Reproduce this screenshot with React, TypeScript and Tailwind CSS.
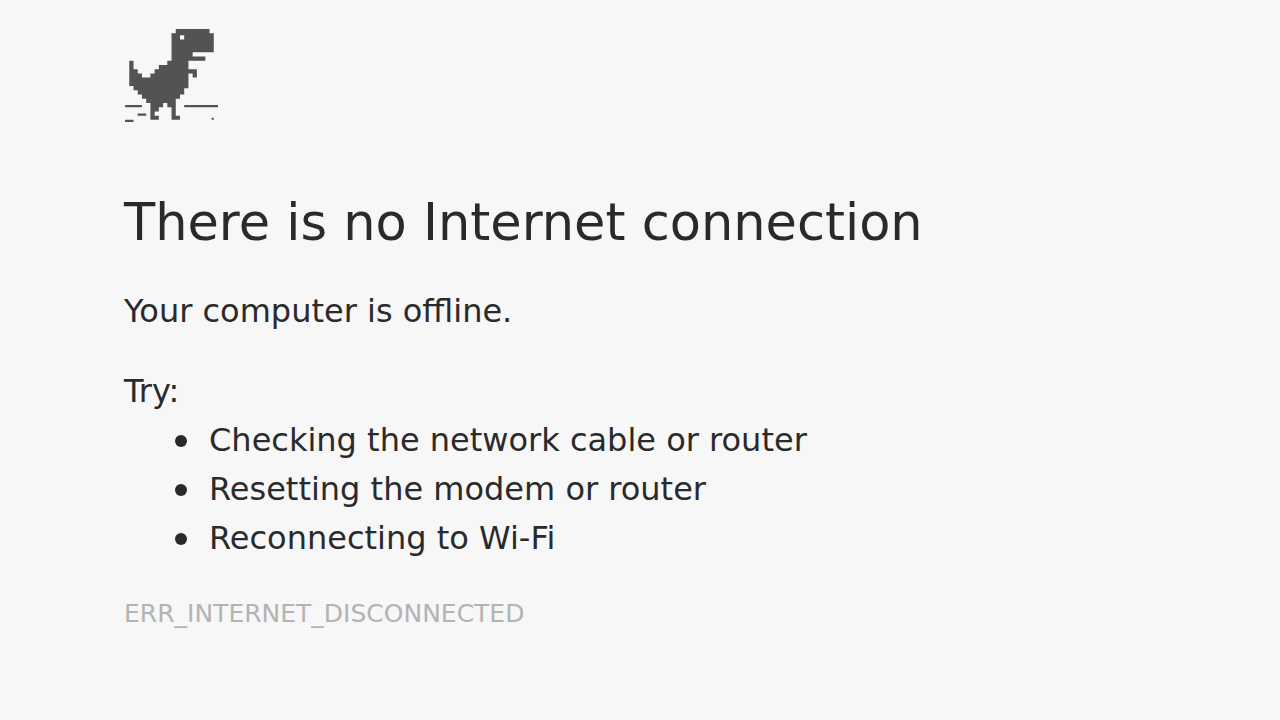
const tips = [
  "Checking the network cable or router",
  "Resetting the modem or router",
  "Reconnecting to Wi-Fi",
];

function DinoIcon() {
  return (
    <svg
      viewBox="-2.5 0 44.5 44"
      className="w-[94px] h-[93px] text-[#535353]"
      fill="currentColor"
      role="img"
      aria-label="Dinosaur"
    >
      {/* body, with the eye cut out */}
      <path
        fillRule="evenodd"
        d="M22 0H38V2H40V11H30V13H36V15H28V19H32V23H30V21H28V28H26V31H24V33H22V41H24V43H20V37H18V35H16V37H14V39H12V41H14V43H10V35H8V33H6V31H4V29H2V27H0V15H2V19H4V21H6V23H10V21H12V19H14V17H18V15H20V2H22Z M24 3V5H26V3Z"
      />
      {/* ground */}
      <path d="M-2 36H6V37H-2Z M4 40H8V41H4Z M-2 43H2V44H-2Z M26 36H42V37H26Z M39 42H40V43H39Z" />
    </svg>
  );
}

export default function App() {
  return (
    <div className="min-h-screen bg-[#f7f7f7] pl-[124px] pr-8 pt-[29px] pb-8 font-['DejaVu_Sans',sans-serif] text-[32px] leading-[49px] text-[#2a2a2c]">
      <DinoIcon />
      <main>
        <h1 className="mt-[69px] text-[51px] leading-[64px]">There is no Internet connection</h1>
        <p className="mt-8">Your computer is offline.</p>
        <div className="mt-[31px]">
          <p>Try:</p>
          <ul className="pl-[51px]">
            {tips.map((tip) => (
              <li
                key={tip}
                className="flex items-center gap-[22px] before:size-3 before:shrink-0 before:rounded-full before:bg-[#2a2a2c]"
              >
                {tip}
              </li>
            ))}
          </ul>
        </div>
        <p className="mt-8 text-[25px] leading-[38px] text-[#b3b3b3]">ERR_INTERNET_DISCONNECTED</p>
      </main>
    </div>
  );
}
